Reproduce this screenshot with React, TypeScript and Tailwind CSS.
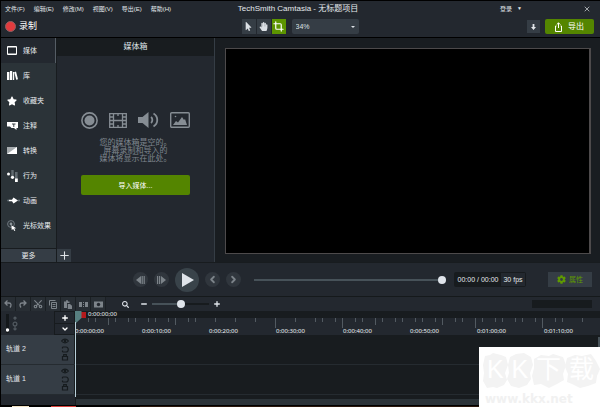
import type { ReactNode } from "react";
import { FaHandPaper, FaStar, FaMousePointer, FaCog, FaSearch } from "react-icons/fa";
import { ChevronDown, ChevronLeft, ChevronRight, Crop, Plus, Scissors, X, Minus } from "lucide-react";

const menus = ["文件(F)", "编辑(E)", "修改(M)", "视图(V)", "导出(E)", "帮助(H)"];

const sideItems: { label: string; icon: ReactNode }[] = [
  {
    label: "媒体",
    icon: (
      <svg viewBox="0 0 10 9" className="w-[10px]" fill="none" stroke="currentColor">
        <path d="M.5.5h9v8h-9z" />
        <path d="M1.500 1.500h7M1.500 7.500h7" strokeDasharray="1 1" />
      </svg>
    ),
  },
  {
    label: "库",
    icon: (
      <svg viewBox="0 0 11 9" className="w-[11px]" fill="currentColor">
        <path d="M0 1h2.4v8H0zM3 0h2.2v9H3zM5.9 1h1.3v8H5.9zM7.3 1.3L9 .6l2 7.6-1.8.6z" />
      </svg>
    ),
  },
  { label: "收藏夹", icon: <FaStar className="h-[10px] w-[10px]" /> },
  {
    label: "注释",
    icon: (
      <svg viewBox="0 0 11 9" className="w-[11px]" fill="currentColor">
        <path d="M0 1h11v6H9.5v2L7 7H4.5L3 5.5H0z" />
        <path d="M5 3h3.5M6.8 3v3" stroke="#2b3338" strokeWidth=".9" />
      </svg>
    ),
  },
  {
    label: "转换",
    icon: (
      <svg viewBox="0 0 10 7" className="w-[10px]">
        <path d="M0 0h10v7H0z" fill="#a6abae" />
        <path d="M10 0v7H0z" fill="#fff" />
      </svg>
    ),
  },
  {
    label: "行为",
    icon: (
      <svg viewBox="0 0 11 12" className="w-[11px]" fill="currentColor">
        <path d="M4.3 0h2.4v8H4.3zM8 2h2.6v8H8z" fill="#626b71" />
        <circle cx="1.5" cy="4" r="1.5" />
        <circle cx="5.5" cy="7.3" r="1.6" />
        <path d="M8 8.5h2.8V12H8z" />
      </svg>
    ),
  },
  {
    label: "动画",
    icon: (
      <svg viewBox="0 0 13 7" className="w-[13px]" fill="currentColor">
        <circle cx="1.2" cy="3.5" r="1" fill="#68747b" />
        <circle cx="12" cy="3.5" r="1" fill="#68747b" />
        <path d="M2 2.700h3L6.500.5l4.500 3-4.500 3L5 4.300H2z" />
      </svg>
    ),
  },
  {
    label: "光标效果",
    icon: (
      <svg viewBox="0 0 10 11" className="w-[10px]" fill="none">
        <circle cx="4" cy="4" r="3.4" stroke="#707980" />
        <circle cx="4" cy="4" r="1.4" fill="#8c959a" />
        <path d="M4.4 5.2l4.8 3-2 .3 1.1 2-1 .5-1.1-2L4.7 10z" fill="#fff" />
      </svg>
    ),
  },
];

// [x, height] of every mark on the time ruler
const ticks = [
  [13, 4], [20, 4], [33, 7], [40, 4], [53, 4], [60, 4], [73, 4], [80, 4], [93, 4], [100, 7],
  [113, 4], [120, 4], [140, 4], [160, 4], [180, 4], [200, 10], [220, 4], [240, 4], [247, 4],
  [260, 4], [267, 10], [280, 4], [287, 4], [300, 7], [307, 4], [320, 4], [327, 4], [340, 4],
  [347, 4], [360, 4], [367, 7], [380, 4], [387, 4], [400, 10], [407, 4], [420, 4], [427, 4],
  [440, 4], [447, 4], [460, 4], [467, 10], [480, 4], [487, 4], [507, 4],
];

const times = [
  "0:00:00;00", "0:00:10;00", "0:00:20;00", "0:00:30;00",
  "0:00:40;00", "0:00:50;00", "0:01:00;00", "0:01:10;00",
];

const TopBar = () => (
  <header className="border-b border-black bg-[#23282f]">
    <div className="flex h-[15px] items-center text-[6px] text-[#e4e8ec]">
      <nav className="flex flex-1 gap-[9px] pl-1">
        {menus.map((m) => (
          <button key={m} className="whitespace-nowrap">{m}</button>
        ))}
      </nav>
      <h1 className="text-[8px]">TechSmith Camtasia - 无标题项目</h1>
      <div className="flex flex-1 items-center justify-end pr-[9px]">
        <button className="mr-[61px] flex items-center gap-[5px]">
          登录
          <span className="text-[5px]">▼</span>
        </button>
        <button aria-label="关闭">
          <X className="h-2 w-2" />
        </button>
      </div>
    </div>
    <div className="flex h-[21px] items-center pr-[6px] pl-1">
      <button className="flex items-center gap-[3px] text-[9px] text-white">
        <span className="h-[11px] w-[11px] rounded-full border border-[#8d6264] bg-[#e23b3e]" />
        录制
      </button>
      <div className="flex flex-1 justify-center pl-9">
        <div className="flex items-center gap-px text-[#dbe0e5]">
          <button aria-label="选择" className="flex h-[15px] w-[14px] items-center justify-center bg-[#353d45]">
            <FaMousePointer className="h-[9px] w-[9px]" />
          </button>
          <button aria-label="平移" className="flex h-[15px] w-[14px] items-center justify-center bg-[#353d45]">
            <FaHandPaper className="h-[9px] w-[9px]" />
          </button>
          <button aria-label="裁剪" className="flex h-[15px] w-[14px] items-center justify-center bg-[#5c9400] text-white">
            <Crop className="h-[11px] w-[11px]" strokeWidth={2.6} />
          </button>
          <label className="relative ml-[5px] flex items-center">
            <select aria-label="缩放" className="h-[15px] w-[67px] appearance-none rounded-xs bg-[#353d45] pl-1 text-[7px]">
              <option>34%</option>
            </select>
            <svg viewBox="0 0 4 2" className="pointer-events-none absolute right-1 w-1" fill="currentColor">
              <path d="M0 0h4L2 2z" />
            </svg>
          </label>
        </div>
      </div>
      <button aria-label="下载" className="mr-[5px] flex h-[13px] w-[13px] items-center justify-center bg-[#353d45]">
        <svg viewBox="0 0 5 6" className="w-[5px]" fill="#e3e7eb">
          <path d="M1.6 0h1.8v3H5L2.5 6 0 3h1.6z" />
        </svg>
      </button>
      <button className="flex h-[15px] w-[49px] items-center justify-center gap-[6px] rounded-xs bg-[#548500] text-[8px] text-white">
        <svg viewBox="0 0 7 10" className="w-[7px]" fill="none" stroke="currentColor">
          <path d="M1.500 4H.5v5.500h6V4h-1M3.500 6V1M1.700 2.600L3.500.8l1.800 1.800" />
        </svg>
        导出
      </button>
    </div>
  </header>
);

const Sidebar = () => (
  <aside className="flex w-[56px] flex-col border-r border-[#181c1f] bg-[#2b3338]">
    {sideItems.map((item, i) => (
      <button
        key={item.label}
        className={
          i === 0
            ? "flex h-[25px] items-center border-r border-[#555d65] bg-[#23282f] pl-[5px] text-[7px] text-[#e8ebee]"
            : "flex h-[25px] items-center pl-[5px] text-[7px] text-[#e8ebee]"
        }
      >
        <span className="flex w-[17px] items-center pl-px text-white">{item.icon}</span>
        <span className="whitespace-nowrap">{item.label}</span>
      </button>
    ))}
    <button className="mt-auto h-[14px] border-t border-[#181c1f] bg-[#353d45] text-[7px] text-[#e8ebee]">更多</button>
  </aside>
);

const MediaBin = () => (
  <section className="flex w-[157px] flex-col bg-[#23282f]">
    <h2 className="flex h-[18px] items-center justify-center bg-[#181c1f] text-[8px] text-[#dfe3e7]">媒体箱</h2>
    <div className="flex flex-1 flex-col items-center pt-[55px]">
      <div className="flex w-[109px] items-center justify-between text-[#868d94]">
        <svg viewBox="0 0 17 17" className="w-[17px]" fill="none" stroke="currentColor">
          <circle cx="8.5" cy="8.5" r="7.6" strokeWidth="1.6" />
          <circle cx="8.5" cy="8.5" r="5" fill="currentColor" stroke="none" />
        </svg>
        <svg viewBox="0 0 18 15" className="w-[18px]" fill="none" stroke="currentColor" strokeWidth="1.3">
          <path d="M.7.7h16.6v13.6H.7zM4.5 1v13M13.5 1v13M4.5 7.5h9M1 4h3M1 7.5h3M1 11h3M14 4h3M14 7.5h3M14 11h3M9 1v2M9 12v2" />
        </svg>
        <svg viewBox="0 0 21 18" className="w-[21px]" fill="none" stroke="currentColor" strokeWidth="1.8">
          <path d="M0 6h4.5L10.500 1v16L4.500 12H0z" fill="currentColor" stroke="none" />
          <path d="M13 6c1.800 1.500 1.800 4.500 0 6M15.500 2.500c5 3 5 10 0 13" />
        </svg>
        <svg viewBox="0 0 20 16" className="w-5" fill="none" stroke="currentColor" strokeWidth="1.4">
          <rect x=".7" y=".7" width="18.600" height="14.600" rx="1" />
          <path d="M3 13l3-4 2 1.500L12 5l2 3 1-1 2 6z" fill="currentColor" stroke="none" />
          <circle cx="5.500" cy="4.500" r=".8" fill="currentColor" stroke="none" />
        </svg>
      </div>
      <p className="mt-[10px] text-center text-[8px] leading-[8px] text-[#7f868e]">
        您的媒体箱是空的。
        <br />
        屏幕录制和导入的
        <br />
        媒体将显示在此处。
      </p>
      <button className="mt-3 h-5 w-[109px] rounded-xs bg-[#548500] text-[7px] text-white">导入媒体...</button>
    </div>
    <button aria-label="添加" className="flex h-[13px] w-[14px] items-center justify-center bg-[#353d45] text-[#dfe3e7]">
      <Plus className="h-[13px] w-[13px]" />
    </button>
  </section>
);

const Round = ({ label, children }: { label: string; children: ReactNode }) => (
  <button aria-label={label} className="flex h-[15px] w-[15px] items-center justify-center rounded-full bg-[#30363d] text-[#7c8389]">
    {children}
  </button>
);

const Playback = () => (
  <section className="flex h-[34px] items-center border-b border-[#15191b] bg-[#23282f] pr-2 pl-[132px]">
    <div className="flex items-center gap-[6px]">
      <Round label="上一帧">
        <svg viewBox="0 0 9 8" className="w-[9px]" fill="currentColor">
          <path d="M5 0v8L0 4zM5.600 0h1.200v8H5.600zM7.600 0h1.200v8H7.600z" />
        </svg>
      </Round>
      <Round label="下一帧">
        <svg viewBox="0 0 9 8" className="w-[9px]" fill="currentColor">
          <path d="M4 0v8l5-4zM0 0h1.200v8H0zM2 0h1.200v8H2z" />
        </svg>
      </Round>
      <button aria-label="播放" className="flex h-6 w-6 items-center justify-center rounded-full bg-[#39434a]">
        <svg viewBox="0 0 12 14" className="ml-px w-3" fill="#dfe4ea">
          <path d="M0 0l12 7-12 7z" />
        </svg>
      </button>
      <Round label="后退">
        <ChevronLeft className="h-[11px] w-[11px]" strokeWidth={4} />
      </Round>
      <Round label="前进">
        <ChevronRight className="h-[11px] w-[11px]" strokeWidth={4} />
      </Round>
    </div>
    <input
      type="range"
      aria-label="播放位置"
      defaultValue={100}
      className="mr-2 ml-[13px] h-2 min-w-0 flex-1 appearance-none bg-transparent [&::-webkit-slider-runnable-track]:h-[2px] [&::-webkit-slider-runnable-track]:bg-[#475259] [&::-webkit-slider-thumb]:-mt-[3px] [&::-webkit-slider-thumb]:h-2 [&::-webkit-slider-thumb]:w-2 [&::-webkit-slider-thumb]:appearance-none [&::-webkit-slider-thumb]:rounded-full [&::-webkit-slider-thumb]:bg-[#dfe4ea]"
    />
    <div className="flex h-[15px] w-[72px] items-center rounded-xs bg-[#171b1e] p-px text-[7px] whitespace-nowrap text-[#e4e8ec]">
      <span className="flex-1 text-center">00:00 / 00:00</span>
      <span className="flex h-full w-6 items-center justify-center bg-[#23282f]">30 fps</span>
    </div>
    <button className="ml-[22px] flex h-[15px] w-[44px] items-center justify-center gap-[3px] bg-[#353d45] text-[7px] text-[#5f9a00]">
      <FaCog className="h-[9px] w-[9px]" />
      属性
    </button>
  </section>
);

const Tool = ({ label, children }: { label: string; children: ReactNode }) => (
  <button aria-label={label} className="flex w-[15px] items-center justify-center border-r border-[#1b2024] bg-[#282e34]">
    {children}
  </button>
);

const Toolbar = () => (
  <section className="flex h-[14px] bg-[#23282f] pr-2 text-[#7d848a]">
    <Tool label="撤消">
      <svg viewBox="0 0 8 8" className="w-2" fill="none" stroke="currentColor" strokeWidth="1.300">
        <path d="M3.500.5L1 3l2.500 2.500M1 3h4c2.500 0 2.500 2.500 1 4.500" />
      </svg>
    </Tool>
    <Tool label="重做">
      <svg viewBox="0 0 8 8" className="w-2" fill="none" stroke="currentColor" strokeWidth="1.300">
        <path d="M4.500.5L7 3 4.500 5.500M7 3H3C.5 3 .5 5.500 2 7.500" />
      </svg>
    </Tool>
    <Tool label="剪切"><Scissors className="h-[10px] w-[10px] rotate-270" strokeWidth={2.800} /></Tool>
    <Tool label="复制">
      <svg viewBox="0 0 8 9" className="w-2" fill="none" stroke="currentColor">
        <path d="M6.500.5h-6v5M2.500 2.500h5v6h-5zM3.500 4.500h3M3.500 6.500h3" />
      </svg>
    </Tool>
    <Tool label="粘贴">
      <svg viewBox="0 0 8 9" className="w-2" fill="currentColor">
        <path d="M0 1.500h2L2.500 0h1L4 1.500h1.500V3H3v5H0zM3.800 4H6l2 1.800V9H3.800z" />
      </svg>
    </Tool>
    <Tool label="拆分">
      <svg viewBox="0 0 9 7" className="w-[9px]" fill="currentColor">
        <path d="M0 1h3v5H0zM6 1h3v5H6zM4 1h1v1H4zM4 3h1v1H4zM4 5h1v1H4z" />
      </svg>
    </Tool>
    <Tool label="快照">
      <svg viewBox="0 0 9 7" className="w-[9px]" fill="currentColor">
        <path d="M0 .5h9v6H0z" />
        <circle cx="4.500" cy="3.500" r="1.700" fill="#23282f" />
      </svg>
    </Tool>
    <div className="flex flex-1 items-center pl-4 text-[#dfe4ea]">
      <FaSearch className="h-[7px] w-[7px]" />
      <button aria-label="缩小" className="ml-[11px]"><Minus className="h-2 w-2" strokeWidth={4} /></button>
      <input
        type="range"
        aria-label="时间轴缩放"
        defaultValue={50}
        className="mx-1 h-2 w-[57px] appearance-none bg-transparent [&::-webkit-slider-runnable-track]:h-[2px] [&::-webkit-slider-runnable-track]:bg-linear-to-r [&::-webkit-slider-runnable-track]:from-[#475259] [&::-webkit-slider-runnable-track]:from-50% [&::-webkit-slider-runnable-track]:to-[#171b1e] [&::-webkit-slider-runnable-track]:to-50% [&::-webkit-slider-thumb]:-mt-[3px] [&::-webkit-slider-thumb]:h-2 [&::-webkit-slider-thumb]:w-2 [&::-webkit-slider-thumb]:appearance-none [&::-webkit-slider-thumb]:rounded-full [&::-webkit-slider-thumb]:bg-[#dfe4ea]"
      />
      <button aria-label="放大"><Plus className="h-2 w-2" strokeWidth={4} /></button>
      <div className="ml-auto h-2 w-[60px] bg-[#171b1e]" />
    </div>
  </section>
);

const Track = ({ name }: { name: string }) => (
  <div className="flex h-[30px] border-b border-[#252b30]">
    <div className="flex w-[74px] items-center justify-between border-r border-[#181c1f] bg-[#353d45] pr-[5px] pl-[5px] text-[7px] text-[#e4e8ec]">
      <span className="pb-[3px]">{name}</span>
      <svg viewBox="0 0 8 23" className="w-2" fill="none" stroke="#161b1e" strokeWidth="1.200">
        <path d="M.5 3c2-2.500 5-2.500 7 0-2 2.500-5 2.500-7 0z" />
        <circle cx="4" cy="3" r=".7" />
        <path d="M1.500 9H5c3 0 3 5 0 5H1.500M1.500 9v1.500M1.500 12.500V14" />
        <path d="M1.500 18.500h5v3.500h-5zM2.700 18v-1.300h2.600V18" />
      </svg>
    </div>
    <div className="flex-1" />
  </div>
);

const Timeline = () => (
  <section className="relative bg-[#181c1f]">
    <div className="flex h-6">
      <div className="flex w-[74px] items-center bg-[#23282f] pl-[5px]">
        <svg viewBox="0 0 14 19" className="w-[14px]">
          <path d="M0 0h3v19H0z" fill="#14181b" />
          <circle cx="1.500" cy="16" r="1.700" fill="#fff" />
          <g fill="none" stroke="#515960" strokeWidth="1.200">
            <circle cx="9" cy="10" r="1.900" />
            <path d="M9 3v3M9 12v4M7.500 4.500L9 3l1.500 1.500M7.500 14.500L9 16l1.500-1.500" />
          </g>
        </svg>
        <div className="ml-auto flex w-[21px] flex-col gap-px bg-[#171b1e] p-px text-white">
          <button aria-label="添加轨道" className="flex h-[11px] items-center justify-center bg-[#23282f]">
            <Plus className="h-2 w-2" strokeWidth={4} />
          </button>
          <button aria-label="轨道选项" className="flex h-[10px] items-center justify-center bg-[#23282f]">
            <ChevronDown className="h-2 w-2" strokeWidth={4} />
          </button>
        </div>
      </div>
      <div className="min-w-0 flex-1 overflow-hidden font-['Noto_Sans',sans-serif] text-[6px] text-[#eef1f4]">
        <div className="h-[7px] pl-[13px] leading-[7px]">0:00:00;00</div>
        <div className="relative h-[17px] bg-[#23282f]">
          <svg className="absolute inset-0 h-full w-full" fill="#525a61">
            {ticks.map(([x, h]) => (
              <rect key={x} x={x} y="0" width="1" height={h} />
            ))}
          </svg>
          <div className="flex gap-px pt-[9px] leading-[8px]">
            {times.map((t) => (
              <span key={t} className="w-[66px] shrink-0">{t}</span>
            ))}
          </div>
        </div>
      </div>
    </div>
    <Track name="轨道 2" />
    <Track name="轨道 1" />
    <div className="flex h-[10px] items-end bg-[#181c1f]">
      <div className="h-full w-[74px] bg-[#23282f]" />
      <div className="ml-px h-[6px] flex-1 bg-[#2b3338]" />
    </div>
    <svg viewBox="0 0 12 86" className="absolute top-0 left-[74px] w-3">
      <path d="M6 1h5v6H6z" fill="#b4191c" />
      <path d="M0 0h6.500v7L1 12H0z" fill="#577f80" />
      <path d="M0 11h1v75H0z" fill="#b9d0da" />
    </svg>
    <div className="absolute top-[26px] right-0 h-[58px] w-[2px] bg-[#475259]" />
  </section>
);

const Watermark = () => (
  <div className="absolute right-0 bottom-0 h-[60px] w-[121px] overflow-hidden bg-white">
    <svg viewBox="0 0 121 60" className="absolute inset-0" fill="#f3f3f3">
      <path d="M6 9l5-1 3-2 8 2 5 2 2 8-3 8 2 7-3 5-7 3-4-1-6 1-4-7 1-8-1-8z" />
      <path d="M31 10l6-3 8-1 7 4 2 8-3 8 1 6-4 6-8 3-8-2-4-7 2-6-1-8z" />
      <path d="M55 12l7-4 8 1 4-2 10 3 3 8-3 9 1 6-7 4-8 4-8-4-7 1-2-9 2-8z" />
      <path d="M88 11l8-3 7 1 9-2 5 7 4 8-3 7-1 7-8 3-8 2-8-4-5-2 1-8-3-7z" />
    </svg>
    <div className="relative flex h-[45px] items-center justify-around pr-[2px] pl-1 text-[25px] text-white">
      <span>K</span>
      <span>K</span>
      <span>下</span>
      <span>载</span>
    </div>
    <div className="relative pl-[6px] font-['DejaVu_Sans'] text-[12px] leading-[14px] font-bold text-[#f1f1f1]">www.kkx.net</div>
  </div>
);

export default function App() {
  return (
    <main className="relative flex min-h-screen flex-col border-t border-l border-black bg-black font-['Liberation_Sans','Noto_Sans_CJK_SC',sans-serif] leading-none">
      <TopBar />
      <div className="flex min-h-[224px] flex-1 border-b border-[#181c1f]">
        <Sidebar />
        <MediaBin />
        <section className="flex flex-1 border-l border-[#353d45] bg-[#191d21] pt-[10px] pr-[9px] pb-2 pl-[10px]">
          <div className="flex-1 border border-r-2 border-[#4d4a4b] bg-black" />
        </section>
      </div>
      <Playback />
      <Toolbar />
      <Timeline />
      <footer className="flex h-[2px] items-end bg-black pl-[11px]">
        <div className="h-px w-[17px] bg-[#f3e3c4]" />
        <div className="ml-[22px] h-px w-[25px] bg-[#d8413c]" />
        <div className="ml-16 h-px flex-1 bg-[#2a170b]" />
      </footer>
      <Watermark />
    </main>
  );
}
